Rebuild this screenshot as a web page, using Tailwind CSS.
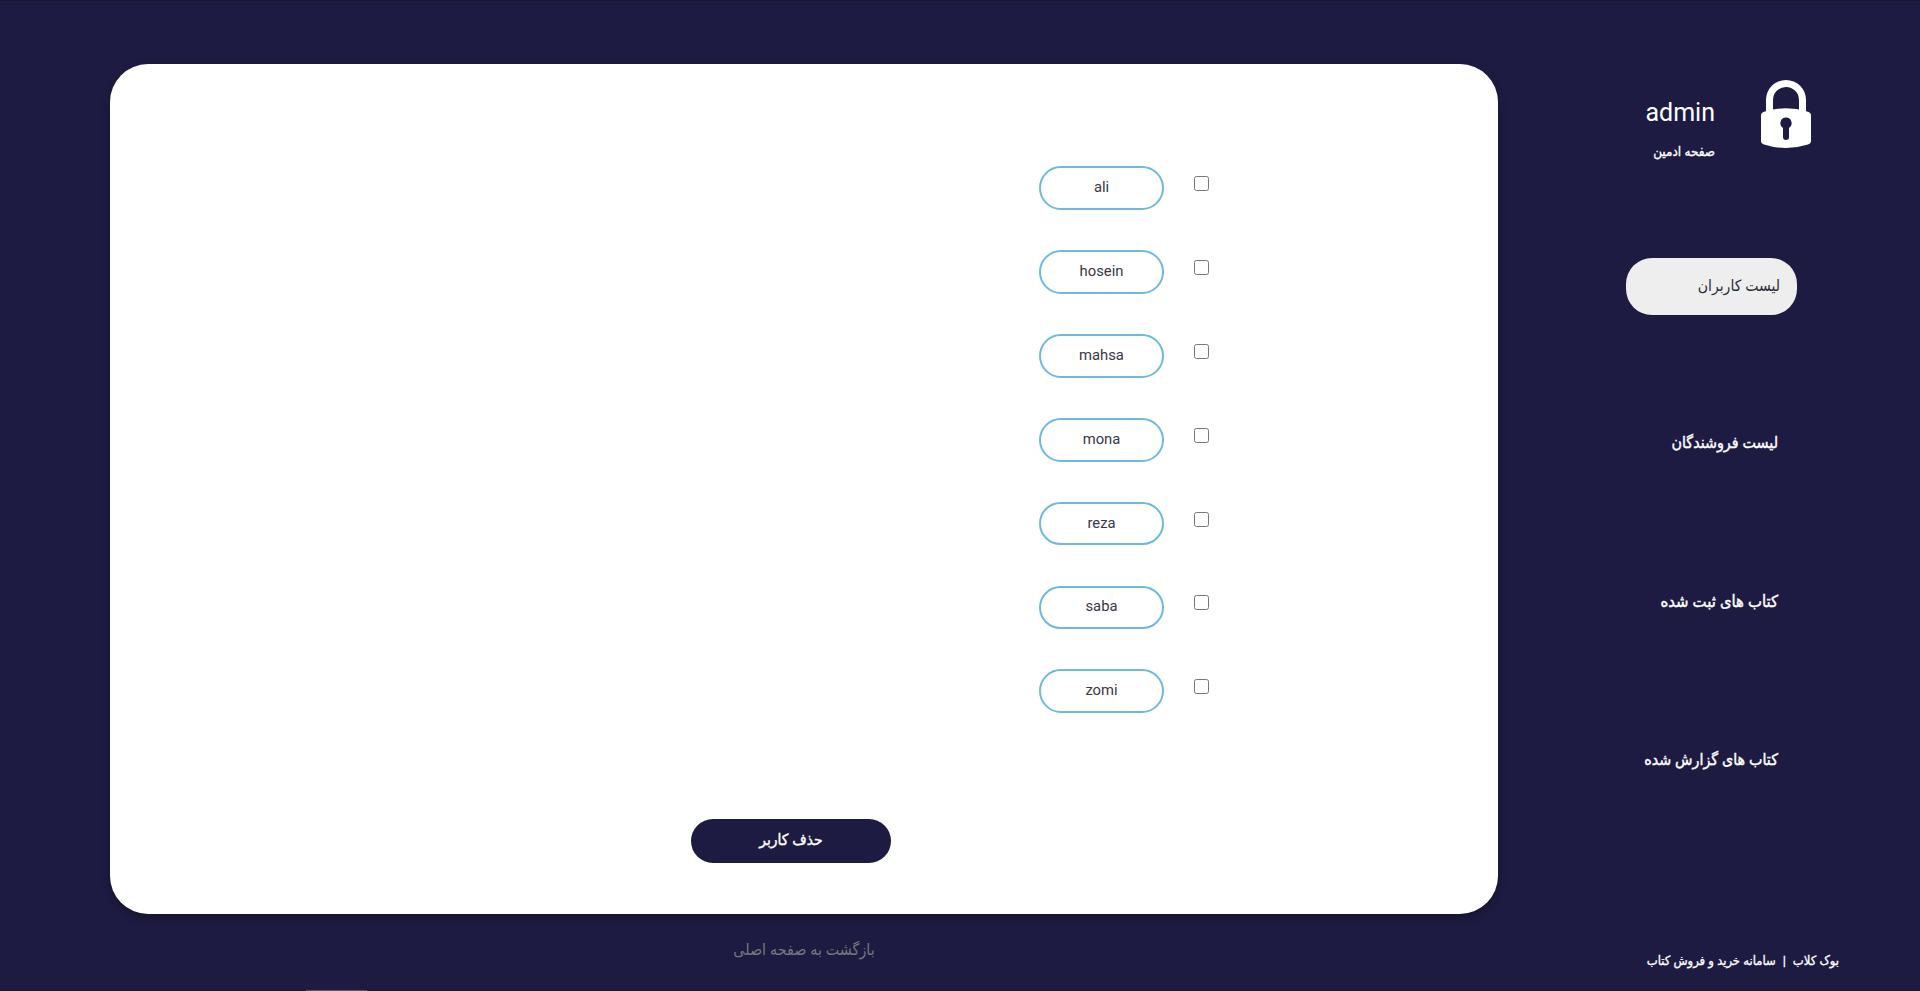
<!DOCTYPE html>
<html lang="fa">
<head>
<meta charset="utf-8">
<title>صفحه ادمین</title>
<script src="https://cdn.jsdelivr.net/npm/@tailwindcss/browser@4"></script>
</head>
<body class="h-screen overflow-hidden flex flex-col border-t border-t-[#121a2e] bg-[#1e1b42] font-['Roboto','DejaVu_Sans_Condensed','DejaVu_Sans',sans-serif]">
  <div class="flex min-h-0 flex-1 pl-[110px]">
    <main class="flex w-[1388px] flex-col pt-[63px]">
      <section class="flex h-[850px] w-full shrink-0 flex-col rounded-[38px] bg-white pt-[102px] shadow-[0_4px_8px_rgba(0,0,0,0.3)]">
        <ul class="flex h-[587px] flex-col pl-[929px] text-[14.800px] text-[#3a3746]">
          <li class="flex h-[84px]"><span class="flex h-11 w-[125px] justify-center rounded-full border-2 border-[#6fb9df] leading-[39px]">ali</span><input type="checkbox" class="mt-[10px] ml-[30px] size-[15px]"></li>
          <li class="flex h-[84px]"><span class="flex h-11 w-[125px] justify-center rounded-full border-2 border-[#6fb9df] leading-[39px]">hosein</span><input type="checkbox" class="mt-[10px] ml-[30px] size-[15px]"></li>
          <li class="flex h-[84px]"><span class="flex h-11 w-[125px] justify-center rounded-full border-2 border-[#6fb9df] leading-[39px]">mahsa</span><input type="checkbox" class="mt-[10px] ml-[30px] size-[15px]"></li>
          <li class="flex h-[84px]"><span class="flex h-11 w-[125px] justify-center rounded-full border-2 border-[#6fb9df] leading-[39px]">mona</span><input type="checkbox" class="mt-[10px] ml-[30px] size-[15px]"></li>
          <li class="flex h-[84px]"><span class="flex h-[43px] w-[125px] justify-center rounded-full border-2 border-[#6fb9df] leading-[39px]">reza</span><input type="checkbox" class="mt-[10px] ml-[30px] size-[15px]"></li>
          <li class="flex h-[83px]"><span class="flex h-[43px] w-[125px] justify-center rounded-full border-2 border-[#6fb9df] leading-[37px]">saba</span><input type="checkbox" class="mt-[9px] ml-[30px] size-[15px]"></li>
          <li class="flex h-[83px]"><span class="flex h-11 w-[125px] justify-center rounded-full border-2 border-[#6fb9df] leading-[39px]">zomi</span><input type="checkbox" class="mt-[10px] ml-[30px] size-[15px]"></li>
        </ul>
        <button dir="rtl" class="mt-[66px] ml-[581px] h-11 w-[200px] rounded-full bg-[#1e1b42] text-[15.5px] text-white [-webkit-text-stroke:0.4px_white]">حذف کاربر</button>
      </section>
      <a dir="rtl" class="mt-[24px] text-center text-[15.9px] leading-6 text-[#77777c]">بازگشت به صفحه اصلی</a>
    </main>
    <aside dir="rtl" class="flex flex-1 flex-col text-white">
      <header class="flex h-[257px] pt-[79px] pr-[109px]">
        <svg class="h-[69px] w-[50px] shrink-0" viewBox="0 0 50 69" fill="#fff">
          <path d="M5 34V20a20 20 0 0 1 40 0v14h-7V20a13 13 0 0 0-26 0v14z"/>
          <path fill-rule="evenodd" d="M4 31.500Q25 25 46 31.500Q50 32.500 50 35V61.500Q50 63.500 47 64.500Q25 71.500 3 64.500Q0 63.500 0 61.500V35Q0 32.500 4 31.500ZM25 37.500a5.700 5.700 0 0 0-3 10.500v9a3 3 0 0 0 6 0v-9a5.700 5.700 0 0 0-3-10.500Z"/>
        </svg>
        <div class="mr-[46px] flex flex-col items-start pt-[17px]">
          <h1 class="text-[25px] leading-8">admin</h1>
          <p class="mt-[11px] text-[13.400px] leading-6 [-webkit-text-stroke:0.3px_white]">صفحه ادمین</p>
        </div>
      </header>
      <nav class="flex flex-col pr-[123px] text-[15.900px]">
        <a class="h-[57px] w-[171px] rounded-[26px] bg-[#eee] pr-[17px] text-[15.600px] leading-[57px] text-[#2b2838]">لیست کاربران</a>
        <a class="mt-[99px] pr-[19px] leading-[57px] [-webkit-text-stroke:0.4px_white]">لیست فروشندگان</a>
        <a class="mt-[102px] pr-[19px] text-[16.500px] leading-[57px] [-webkit-text-stroke:0.4px_white]">کتاب های ثبت شده</a>
        <a class="mt-[101px] pr-[19px] leading-[57px] [-webkit-text-stroke:0.4px_white]">کتاب های گزارش شده</a>
      </nav>
      <footer class="mt-[161px] flex pr-[81px] text-[12.900px] leading-6 [-webkit-text-stroke:0.3px_white]">
        <span>بوک کلاب</span><span class="mx-[7px]">|</span><span>سامانه خرید و فروش کتاب</span>
      </footer>
    </aside>
  </div>
  <div class="flex h-px shrink-0 bg-[#1a1a24] pl-[306px]"><div class="h-px w-[61px] bg-[#5a5464]"></div></div>
</body>
</html>
